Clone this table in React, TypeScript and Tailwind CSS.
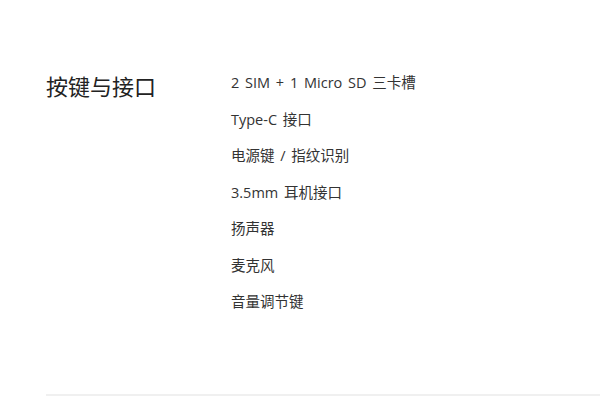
const items = [
  '2 SIM + 1 Micro SD 三卡槽',
  'Type-C 接口',
  '电源键 / 指纹识别',
  '3.5mm 耳机接口',
  '扬声器',
  '麦克风',
  '音量调节键',
];

export default function App() {
  return (
    <div
      className="min-h-screen w-[600px] overflow-hidden bg-white pl-[46px] text-[#333]"
      style={{ fontFamily: '"Open Sans", "Noto Sans CJK SC", sans-serif' }}
    >
      <div className="flex pt-[70px] pb-[82px]">
        {/* 标题 */}
        <h2
          className="w-[185px] shrink-0 text-[22px] leading-[30px] font-normal text-[#222]"
          style={{ fontFamily: '"Noto Sans CJK SC", sans-serif' }}
        >
          按键与接口
        </h2>

        {/* 规格列表 */}
        <ul className="flex flex-col gap-[16.5px] pt-[3px] text-[14.5px] leading-[20px] [word-spacing:2px]">
          {items.map((item) => (
            <li key={item}>{item}</li>
          ))}
        </ul>
      </div>
      <div className="h-[2px] bg-[#f0f0f0]" />
    </div>
  );
}
